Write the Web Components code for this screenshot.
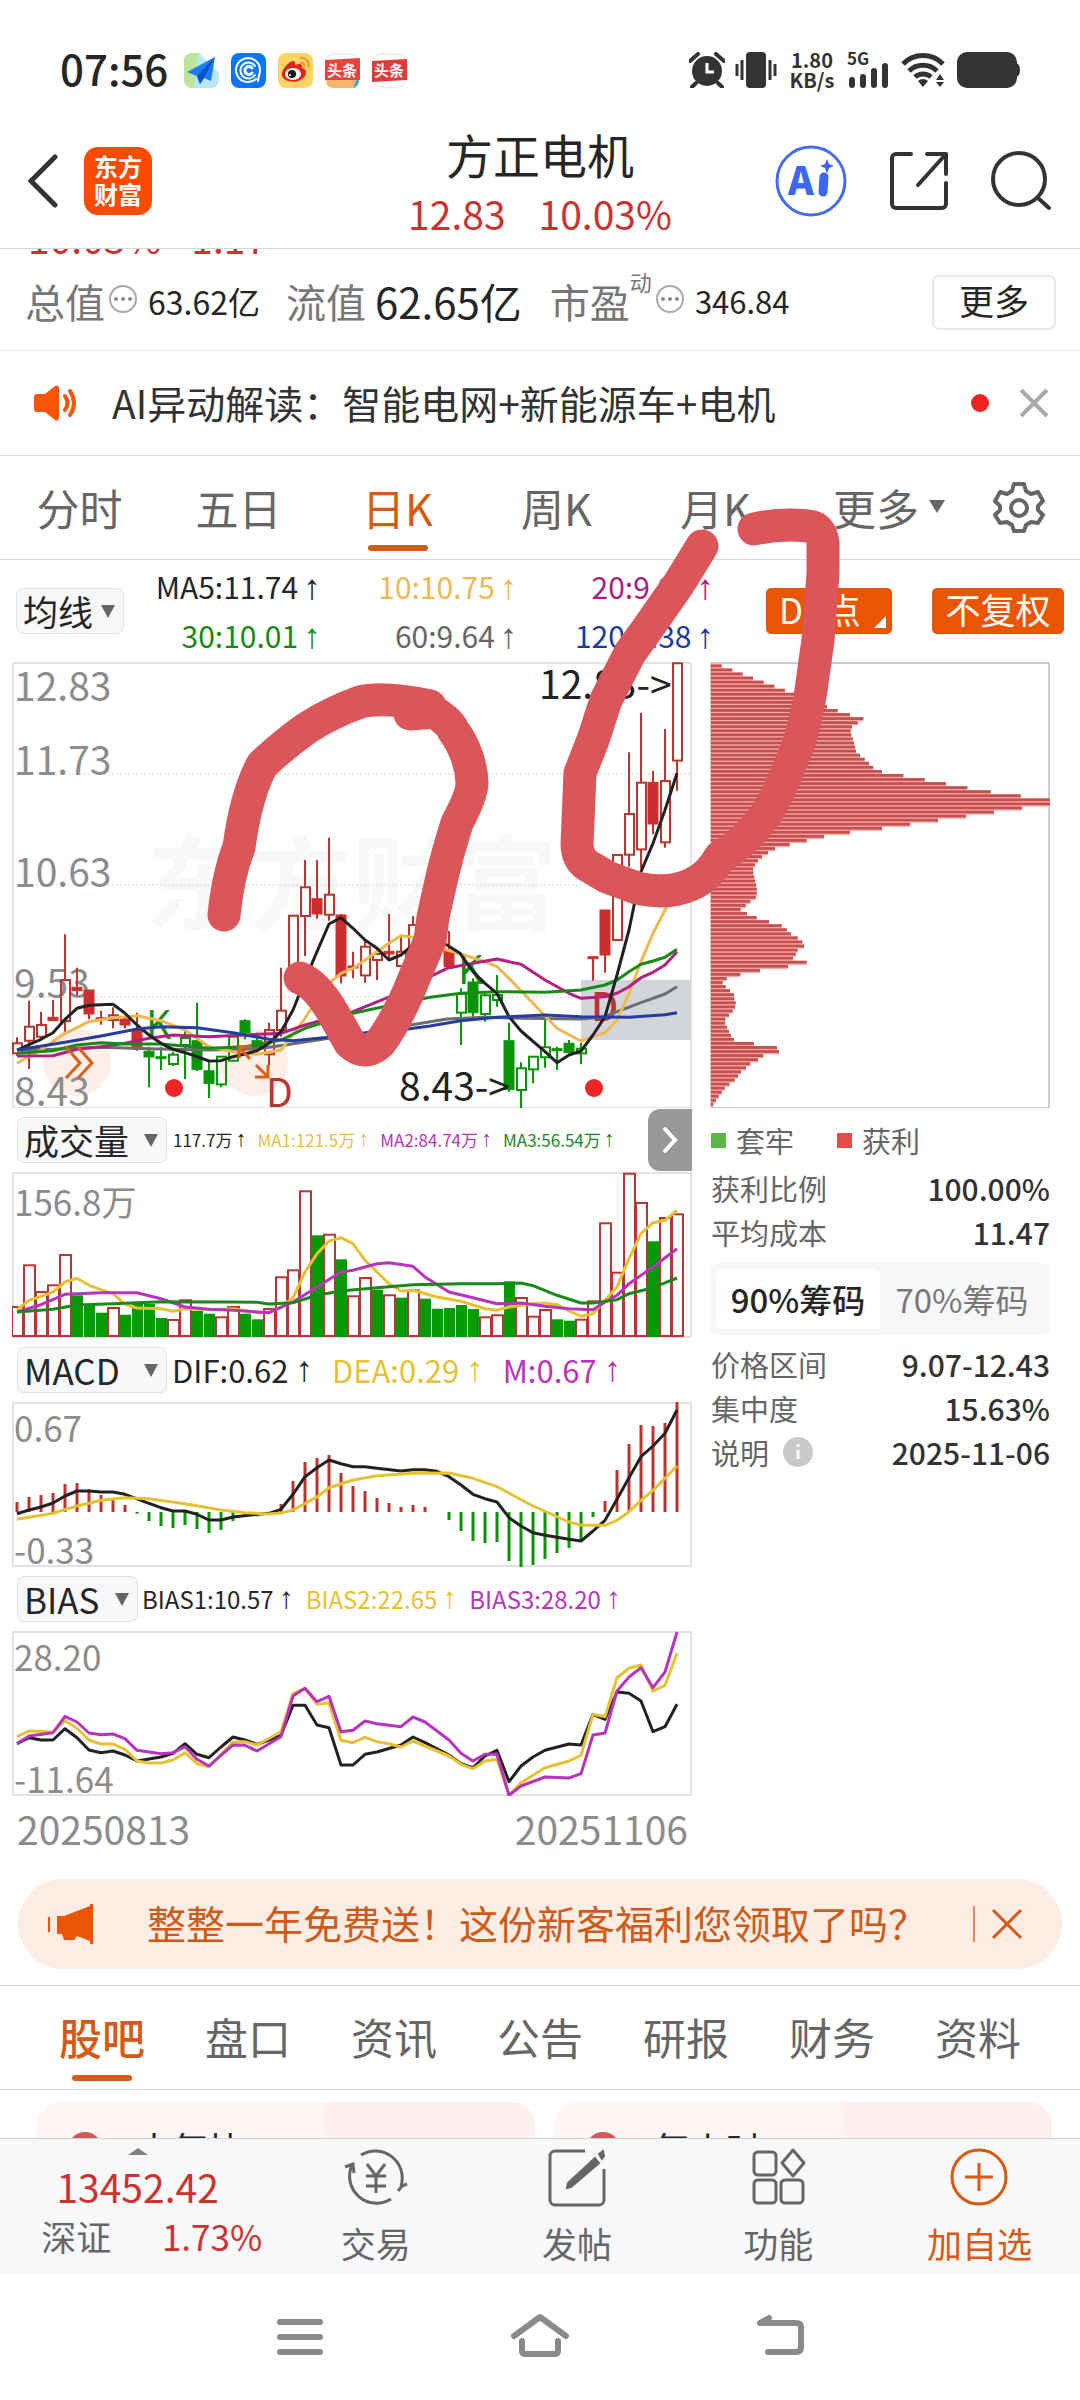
<!DOCTYPE html>
<html lang="zh-CN">
<head>
<meta charset="utf-8">
<meta name="viewport" content="width=device-width, initial-scale=1">
<title>方正电机 12.83</title>
<style>
    body {
        margin: 0;
        background: #fff;
        color: #262626;
        font-family: "Noto Sans CJK SC", "Noto Sans", sans-serif;
    }
</style>
</head>
<body>
<stock-page></stock-page>

<script>
const baseStyle = `
    * { box-sizing: border-box; }
    :host { display: block; }
    svg { display: block; }
    button, select {
        font: inherit;
        color: inherit;
        background: none;
        border: 0;
        padding: 0;
        margin: 0;
        cursor: pointer;
    }
    a { color: inherit; text-decoration: none; }
`;

class BaseElement extends HTMLElement {
    constructor() {
        super();
        this.shadowDOM = this.attachShadow({mode: "open"});
    }

    connectedCallback() {
        this.shadowDOM.innerHTML = `<style>${baseStyle}${this.styles()}</style>${this.markup()}`;
    }

    styles() { return ""; }
    markup() { return ""; }
}

class StatusBar extends BaseElement {
    styles() {
        return `
        :host { padding: 16px 60px 0 60px; }
        .bar { height: 108px; display: flex; align-items: center; }
        .time { font-size: 42px; font-weight: 500; line-height: 44px; margin: 0 16px 4px 0; }
        .apps { display: flex; gap: 12px; flex: 1; }
        .system { display: flex; align-items: center; gap: 10px; color: #333; }
        .speed { font-size: 20px; font-weight: 700; line-height: 20px; text-align: center; width: 50px; }
        .signal text { font-size: 17px; font-weight: 700; }
        .apps text { font-size: 15px; font-weight: 700; fill: #fff; }
        `;
    }

    markup() {
        return `
        <div class="bar">
            <span class="time">07:56</span>
            <div class="apps">
                <svg width="35" height="35" viewBox="0 0 35 35">
                    <rect width="35" height="35" rx="8" fill="#b8e7f7"/>
                    <path d="M0 8a8 8 0 0 1 8-8h6L10 35H8a8 8 0 0 1-8-8z" fill="#bde59a"/>
                    <path d="M15 0h12a8 8 0 0 1 8 8v12z" fill="#fff"/>
                    <path d="M31 4 3 19l10 4 3 8 4-6 7 3z" fill="#1a7df0"/>
                    <path d="M31 4 13 23l3 8 4-6z" fill="#0b56c4"/>
                </svg>
                <svg width="35" height="35" viewBox="0 0 35 35">
                    <rect width="35" height="35" rx="8" fill="#0a76f2"/>
                    <g fill="none" stroke="#fff" stroke-width="2" stroke-linecap="round">
                        <path d="M25 26a12 12 0 1 1 4-9c0 5-2 7-2 11"/>
                        <path d="M24 22a8 8 0 1 1 0-9"/>
                        <path d="M21 20a4 4 0 1 1 0-5" stroke-width="3"/>
                    </g>
                </svg>
                <svg width="35" height="35" viewBox="0 0 35 35">
                    <rect width="35" height="35" rx="8" fill="#fcd466"/>
                    <path d="M15 8c3 0 2 3 2 4 5-2 8-1 7 3 4 1 5 4 3 8-3 5-11 7-17 5C3 26 2 20 7 14c3-4 6-6 8-6z" fill="#e2231a"/>
                    <ellipse cx="15" cy="21" rx="8" ry="6" fill="#fff"/>
                    <circle cx="14" cy="21" r="4" fill="#111"/>
                    <circle cx="12" cy="22" r="1" fill="#fff"/>
                    <path d="M22 5c6-1 10 4 8 10M22 10c3-1 5 1 4 4" fill="none" stroke="#f3952c" stroke-width="2"/>
                </svg>
                <svg width="35" height="35" viewBox="0 0 35 35">
                    <rect x="1" y="1" width="33" height="33" rx="8" fill="#fff" stroke="#e2e2e2"/>
                    <path d="M0 7 35 5v22H0z" fill="#e8433f"/>
                    <path d="M1 27h33c0 5-3 8-8 8H9c-5 0-8-3-8-8z" fill="#f8b46c"/>
                    <path d="M28 35c4-1 6-4 6-8h-3z" fill="#38b2cf"/>
                    <text x="2" y="23">头条</text>
                </svg>
                <svg width="35" height="35" viewBox="0 0 35 35">
                    <rect x="1" y="1" width="33" height="33" rx="8" fill="#fff" stroke="#e2e2e2"/>
                    <path d="M0 8 35 6v21L0 29z" fill="#e03a3a"/>
                    <text x="2" y="23">头条</text>
                </svg>
            </div>
            <div class="system">
                <svg width="36" height="36" viewBox="0 0 36 36" fill="#333">
                    <circle cx="18" cy="19" r="15"/>
                    <path d="M18 11v9h7" fill="none" stroke="#fff" stroke-width="3"/>
                    <path d="M1 9 9 2M27 2l8 7M7 31l-4 4M29 31l4 4" stroke="#333" stroke-width="4" stroke-linecap="round"/>
                </svg>
                <svg width="42" height="36" viewBox="0 0 42 36" fill="#333">
                    <rect x="11" width="20" height="36" rx="4"/>
                    <path d="M2 12v12M7 8v20M35 8v20M40 12v12" stroke="#333" stroke-width="3"/>
                </svg>
                <span class="speed">1.80 KB/s</span>
                <svg class="signal" width="44" height="36" viewBox="0 0 44 36" fill="#333">
                    <text x="0" y="13">5G</text>
                    <path d="M5 28v5M16 25v8M27 19v14M38 14v19" stroke="#333" stroke-width="6" stroke-linecap="round"/>
                </svg>
                <svg width="46" height="36" viewBox="0 0 46 36" fill="none" stroke="#333" stroke-width="5">
                    <path d="M2 12a28 28 0 0 1 40 0M8 19a20 20 0 0 1 28 0M14 25a12 12 0 0 1 16 0"/>
                    <path d="M17 29a7 7 0 0 1 10 0l-5 6zM35 28l4-6 4 6zM35 30h8l-4 5z" fill="#333" stroke="none"/>
                </svg>
                <svg width="63" height="36" viewBox="0 0 63 36" fill="#333">
                    <rect width="60" height="36" rx="10"/>
                    <path d="M59 11q4 1 4 7t-4 7z"/>
                </svg>
            </div>
        </div>`;
    }
}
customElements.define("status-bar", StatusBar);

class StockHeader extends BaseElement {
    styles() {
        return `
        :host { border-bottom: 1px solid #d5d5d8; }
        header { height: 124px; display: grid; grid-template-columns: 1fr auto 1fr; align-items: center; padding: 0 28px; }
        .side { display: flex; align-items: center; padding-bottom: 10px; }
        .left { gap: 26px; }
        .right { justify-content: flex-end; gap: 41px; }
        .logo {
            width: 68px; height: 68px; border-radius: 14px; background: #fb4a02; color: #fff;
            font-size: 24px; font-weight: 700; line-height: 28px; padding: 5px 10px; text-align: center;
        }
        .title { text-align: center; padding-bottom: 6px; }
        h1 { margin: 0; font-size: 47px; font-weight: 400; line-height: 60px; }
        .quote { display: flex; justify-content: center; gap: 33px; font-size: 39px; line-height: 58px; color: #cd3230; }
        .ai text { font-size: 39px; font-weight: 900; fill: #3c66f4; }
        `;
    }

    markup() {
        return `
        <header>
            <div class="side left">
                <button aria-label="返回">
                    <svg width="30" height="54" viewBox="0 0 30 54" fill="none" stroke="#333" stroke-width="5" stroke-linecap="round"><path d="M27 3 3 27l24 24"/></svg>
                </button>
                <a class="logo" href="#home">东方<br>财富</a>
            </div>
            <div class="title">
                <h1>方正电机</h1>
                <div class="quote"><span>12.83</span><span>10.03%</span></div>
            </div>
            <div class="side right">
                <button class="ai" aria-label="Ai">
                    <svg width="74" height="74" viewBox="0 0 74 74">
                        <circle cx="37" cy="37" r="34" fill="none" stroke="#456cf0" stroke-width="3"/>
                        <text x="14" y="51">A</text>
                        <path d="m50 33-1 15" stroke="#3c66f4" stroke-width="9" stroke-linecap="round"/>
                        <path d="m53 15 2 5 5 2-5 2-2 6-2-6-5-2 5-2z" fill="#3c66f4"/>
                    </svg>
                </button>
                <button aria-label="分享">
                    <svg width="60" height="60" viewBox="0 0 60 60" fill="none" stroke="#333" stroke-width="4" stroke-linecap="round" stroke-linejoin="round">
                        <path d="M22 3H7a4 4 0 0 0-4 4v46a4 4 0 0 0 4 4h46a4 4 0 0 0 4-4V32M38 3h19v20M57 3 29 34"/>
                    </svg>
                </button>
                <button aria-label="搜索">
                    <svg width="62" height="60" viewBox="0 0 62 60" fill="none" stroke="#333" stroke-width="4" stroke-linecap="round">
                        <circle cx="29" cy="28" r="26"/><path d="m48 47 11 10"/>
                    </svg>
                </button>
            </div>
        </header>`;
    }
}
customElements.define("stock-header", StockHeader);

class StockStats extends BaseElement {
    styles() {
        return `
        :host { border-bottom: 1px solid #ececee; }
        .previous { height: 8px; overflow: hidden; display: flex; align-items: flex-end; gap: 30px; padding-left: 28px; font-size: 39px; line-height: 40px; color: #cd3230; }
        .row { height: 93px; display: flex; align-items: center; padding: 0 24px 6px 25px; white-space: nowrap; }
        .name { font-size: 40px; color: #777; }
        .value { font-size: 32px; margin-right: 26px; }
        .large { font-size: 42px; margin: 0 28px 0 9px; }
        .more { margin: 3px 0 0 auto; width: 124px; height: 55px; border: 2px solid #e6e7ea; border-radius: 7px; font-size: 35px; line-height: 46px; padding-bottom: 5px; }
        svg { margin: 0 10px 4px 3px; flex: none; }
        sup { font-size: 22px; color: #777; align-self: flex-start; line-height: 48px; }
        .ratio { font-size: 31px; }
        `;
    }

    markup() {
        const bubble = `<svg width="30" height="30" viewBox="0 0 30 30"><circle cx="15" cy="15" r="13" fill="none" stroke="#aaa" stroke-width="2"/><g fill="#888"><circle cx="8" cy="15" r="2"/><circle cx="15" cy="15" r="2"/><circle cx="22" cy="15" r="2"/></g></svg>`;
        return `
        <div class="previous"><span>10.03%</span><span>1.17</span></div>
        <div class="row">
            <span class="name">总值</span>${bubble}<span class="value">63.62亿</span>
            <span class="name">流值</span><span class="large">62.65亿</span>
            <span class="name">市盈</span><sup>动</sup>${bubble}<span class="ratio">346.84</span>
            <button class="more">更多</button>
        </div>`;
    }
}
customElements.define("stock-stats", StockStats);

class NoticeBar extends BaseElement {
    styles() {
        return `
        :host { border-bottom: 1px solid #d8dade; }
        .row { height: 104px; display: flex; align-items: center; padding: 0 31px 0 34px; }
        .text { flex: 1; margin-left: 32px; padding-bottom: 3px; font-size: 39px; color: #333; white-space: nowrap; }
        .dot { width: 18px; height: 18px; border-radius: 50%; background: #f02222; margin-right: 30px; }
        `;
    }

    markup() {
        return `
        <div class="row">
            <svg width="46" height="36" viewBox="0 0 46 36">
                <path d="M3 9h8L21 1q4-2 4 3v28q0 5-4 3l-10-8H3q-3 0-3-3V12q0-3 3-3z" fill="#fb5404"/>
                <path d="M31 11q5 7 0 14M36 6q8 12 0 24" fill="none" stroke="#fb5404" stroke-width="4" stroke-linecap="round"/>
            </svg>
            <span class="text"><slot></slot></span>
            <i class="dot"></i>
            <button aria-label="关闭"><svg width="30" height="30" viewBox="0 0 30 30"><path d="m2 2 26 26M28 2 2 28" stroke="#aaa" stroke-width="4"/></svg></button>
        </div>`;
    }
}
customElements.define("notice-bar", NoticeBar);

class PeriodTabs extends BaseElement {
    styles() {
        return `
        :host { border-bottom: 1px solid #d5d8dc; }
        nav { height: 103px; display: flex; padding-right: 25px; color: #666; font-size: 43px; }
        button { flex: 159; position: relative; line-height: 60px; padding-bottom: 2px; }
        .more { flex: 188; display: flex; align-items: center; justify-content: center; gap: 10px; }
        .gear { flex: 72; display: flex; align-items: center; justify-content: center; }
        .on { color: #d65a14; }
        .on::after { content: ""; position: absolute; left: 50%; bottom: 8px; width: 60px; height: 6px; margin-left: -30px; border-radius: 3px; background: #d65a14; }
        `;
    }

    markup() {
        return `
        <nav>
            <button>分时</button><button>五日</button><button class="on">日K</button><button>周K</button><button>月K</button>
            <button class="more">更多<svg width="16" height="14" viewBox="0 0 16 14"><path d="M0 0h16L8 13z" fill="#666"/></svg></button>
            <button class="gear" aria-label="设置">
                <svg width="52" height="52" viewBox="0 0 52 52" fill="none" stroke="#666" stroke-width="4" stroke-linejoin="round">
                    <path d="M21 3h10l2 7 5 3 7-2 5 9-5 5v4l5 5-5 8-7-1-5 3-2 6H21l-2-6-5-3-7 1-5-8 5-5v-4l-5-5 5-9 7 2 5-3z"/>
                    <circle cx="26" cy="27" r="8"/>
                </svg>
            </button>
        </nav>`;
    }
}
customElements.define("period-tabs", PeriodTabs);

class DropPick extends BaseElement {
    styles() {
        return `
        :host { flex: none; position: relative; }
        select { appearance: none; width: 100%; height: 46px; padding: 0 6px 3px; border: 1px solid #dfe2e6; border-radius: 7px; background: #f6f8fa; font-size: 35px; line-height: 44px; color: #262626; }
        :host::after { content: ""; position: absolute; right: 9px; top: 17px; border: 7px solid transparent; border-top: 13px solid #666; border-bottom: 0; }
        `;
    }

    markup() {
        return `<select aria-label="指标"><option>${this.getAttribute("value")}</option></select>`;
    }
}
customElements.define("drop-pick", DropPick);

class AverageBar extends BaseElement {
    styles() {
        return `
        .bar { height: 102px; display: flex; align-items: center; padding: 0 16px; }
        drop-pick { width: 108px; }
        .list { flex: 1; display: grid; grid-template-columns: repeat(3, 1fr); margin-right: 52px; font-size: 30px; line-height: 49px; text-align: right; white-space: nowrap; }
        .list i { font-family: "Liberation Sans", sans-serif; font-style: normal; font-size: 35px; line-height: 40px; margin-left: 5px; }
        .tag { height: 46px; background: #ea5504; color: #fff; border-radius: 5px; font-size: 35px; line-height: 42px; padding-bottom: 4px; position: relative; }
        .dk { width: 126px; margin-right: 40px; text-align: left; padding-left: 13px; }
        .dk::after { content: ""; position: absolute; right: 6px; bottom: 6px; border-left: 12px solid transparent; border-bottom: 12px solid #fff; }
        .adjust { width: 132px; }
        `;
    }

    markup() {
        const items = [
            ["MA5:11.74", "#262626"], ["10:10.75", "#efb94f"], ["20:9.98", "#ad1c80"],
            ["30:10.01", "#148a14"], ["60:9.64", "#666"], ["120:9.38", "#203a9a"],
        ];
        return `
        <div class="bar">
            <drop-pick value="均线"></drop-pick>
            <div class="list">${items.map(([text, color]) => `<span style="color:${color}">${text}<i>↑</i></span>`).join("")}</div>
            <button class="tag dk">DK点</button>
            <button class="tag adjust">不复权</button>
        </div>`;
    }
}
customElements.define("average-bar", AverageBar);

const RED = "#b83632";
const GREEN = "#0a940a";
const STEP = 12;
const slot = (i) => 5 + STEP * i;

// "x,y x,y" pairs in chart data units to an svg polyline
function trend(points, color, toX, toY) {
    const path = points.split(" ").map((pair) => {
        const [x, y] = pair.split(",").map(Number);
        return `${toX(x)},${toY(y).toFixed(1)}`;
    });
    return `<polyline points="${path.join(" ")}" fill="none" stroke="${color}" stroke-width="3" stroke-linejoin="round"/>`;
}

// high, body top, body bottom, low, kind (h hollow red, f solid red, G hollow green, g solid green)
const candles = `
1162 1180 1210 1218 h|1052 1130 1172 1257 h|1085 1125 1160 1168 h|1050 1102 1112 1112 f|853 990 1113 1145 h|953 1012 1022 1035 f
1020 1020 1092 1108 f|1082 1103 1109 1124 f|1072 1096 1110 1135 h|1100 1107 1125 1135 f|1088 1140 1198 1202 f|1190 1204 1221 1312 g
1190 1220 1225 1260 g|1205 1214 1242 1248 G|1130 1164 1185 1287 G|1058 1172 1258 1263 g|1232 1262 1300 1344 g|1218 1220 1303 1312 G
1155 1160 1232 1232 G|1108 1112 1148 1168 g|1148 1172 1192 1200 g|1118 1140 1213 1245 h|953 1082 1140 1160 h|795 797 1010 1010 h
630 712 798 918 h|630 746 792 806 f|563 734 794 812 h|792 795 978 1000 f|905 948 954 985 f|872 890 976 998 h
895 912 930 990 h|792 904 912 928 f|855 905 948 950 h|798 825 900 930 h|830 860 900 930 f|850 870 900 930 f
843 900 950 950 f|1015 1032 1088 1185 G|985 996 1088 1100 g|1030 1036 1092 1115 G|975 1035 1050 1070 G|1118 1172 1318 1325 g
1237 1255 1320 1376 G|1220 1220 1258 1300 G|1108 1192 1222 1253 G|1190 1196 1201 1260 g|1170 1180 1208 1210 g|1178 1196 1210 1242 G
920 920 926 992 f|780 780 915 968 f|613 615 870 870 h|307 492 614 650 h|188 398 598 655 h|362 397 522 553 f
237 393 577 593 h|37 40 332 422 h`.trim().split(/[|\n]/);

class KlineChart extends BaseElement {
    styles() {
        return `
        svg { width: 100%; height: auto; }
        .axis { font-size: 39px; fill: #8c8c8c; }
        .mark { font-size: 39px; }
        .brand { font-size: 103px; font-weight: 700; fill: #f8f8f8; }
        `;
    }

    candle(row, i) {
        const [high, top, bottom, low, kind] = row.split(" ");
        const y = (v) => ((v - 36) / 3);
        const x = slot(i);
        const color = kind.toLowerCase() === "g" ? GREEN : kind === "f" ? "#cc302e" : RED;
        const hollow = kind === "h" || kind === "G";
        const inset = hollow ? 1 : 0;
        return `<path d="M${x} ${y(high).toFixed(1)}V${y(top).toFixed(1)}M${x} ${y(bottom).toFixed(1)}V${y(low).toFixed(1)}" stroke="${color}" stroke-width="2"/>
            <rect x="${x - 5 + inset}" y="${y(top).toFixed(1)}" width="${10 - inset * 2 + (hollow ? 1 : 0)}" height="${Math.max(2, (bottom - top) / 3).toFixed(1)}" fill="${hollow ? "none" : color}" stroke="${color}" stroke-width="${hollow ? 2 : 1}"/>`;
    }

    markup() {
        const x = (v) => v - 12;
        const y = (v) => (v - 36) / 3;
        const lines = [
            ["17,1200 53,1198 101,1192 149,1196 209,1200 257,1197 290,1183 329,1165 365,1148 400,1130 447,1107 485,1102 521,1105 581,1107 605,1100 617,1085 641,1058 665,1032 677,1010", "#6d6d70"],
            ["17,1240 41,1200 65,1150 89,1115 113,1103 137,1097 161,1112 185,1140 209,1190 233,1205 257,1213 281,1200 305,1105 325,1010 341,970 353,955 377,905 389,880 401,857 413,862 430,880 447,900 461,912 485,935 497,950 509,985 533,1060 557,1135 581,1173 593,1160 605,1148 617,1110 629,1030 641,935 653,850 665,780 677,715", "#efb850"],
            ["17,1218 53,1217 77,1198 101,1190 125,1180 149,1165 173,1155 209,1160 245,1155 281,1150 305,1125 353,1085 390,1040 420,995 447,955 473,940 497,927 521,943 545,990 569,1030 581,1045 605,1040 617,1030 629,1010 641,983 653,967 665,945 677,905", "#b3207f"],
            ["17,1210 53,1202 77,1185 101,1178 125,1182 161,1182 209,1195 245,1190 281,1170 305,1135 353,1090 400,1060 430,1042 461,1030 497,1025 545,1027 581,1020 605,1005 617,990 629,965 641,943 653,933 665,922 677,898", "#168c16"],
            ["17,1200 41,1168 53,1148 65,1108 77,1075 89,1066 113,1063 125,1090 137,1125 149,1155 161,1180 173,1198 185,1208 197,1220 209,1233 221,1232 233,1220 245,1212 257,1202 269,1180 281,1145 293,1080 305,990 317,905 329,822 341,803 353,835 365,870 377,895 389,930 401,915 413,885 430,870 447,885 460,910 473,965 485,1000 497,1030 509,1100 521,1143 545,1205 557,1238 569,1215 581,1203 593,1155 605,1100 617,975 629,840 641,665 653,580 665,480 677,370", "#222"],
            ["17,1200 65,1177 101,1158 137,1137 161,1130 197,1133 233,1148 269,1168 293,1172 329,1162 365,1150 400,1140 430,1128 461,1112 497,1102 545,1095 581,1100 629,1102 665,1094 677,1088", "#263c9e"],
        ];
        return `
        <svg viewBox="0 0 680 446" role="img" aria-label="日K线图">
            <text class="brand" x="134" y="261">东方财富</text>
            <rect x="1" y="1" width="678" height="445" fill="none" stroke="#e2e2e2" stroke-width="2"/>
            <path d="M0 112h680M0 223h680M0 335h680" stroke="#d4d4d4" stroke-dasharray="2 2"/>
            <rect x="569" y="318" width="110" height="60" fill="#d2d6db"/>
            <g fill="#fdeee7"><circle cx="65" cy="400" r="34"/><circle cx="242" cy="400" r="34"/></g>
            <g class="axis">
                <text x="2" y="39">12.83</text><text x="2" y="113">11.73</text><text x="2" y="225">10.63</text>
                <text x="2" y="336">9.53</text><text x="2" y="444">8.43</text>
            </g>
            <g class="mark">
                <text x="134" y="377" fill="#168c16">K</text><text x="446" y="322" fill="#168c16">K</text>
                <text x="254" y="445" fill="#b83632">D</text><text x="579" y="359" fill="#b83632" font-weight="500">D</text>
            </g>
            ${candles.map(this.candle).join("")}
            ${lines.map(([points, color]) => trend(points, color, x, y)).join("")}
            <g fill="none" stroke="#dc5f16" stroke-width="3">
                <path d="m54 385 14 16-14 15M66 385l14 16-14 15"/>
                <path d="M227 396v-11h13M227 385l11 12M244 403l12 12M256 403v12h-13"/>
            </g>
            <g fill="#f22323"><circle cx="162" cy="426" r="9"/><circle cx="582" cy="426" r="9"/></g>
            <g class="mark" fill="#222">
                <text x="527" y="37">12.83-&gt;</text><text x="387" y="439">8.43-&gt;</text>
            </g>
        </svg>`;
    }
}
customElements.define("kline-chart", KlineChart);

class IndicatorRow extends BaseElement {
    styles() {
        return `
        .row { height: 64px; display: flex; align-items: center; padding-left: 5px; }
        .next { flex: none; margin-left: auto; width: 44px; height: 62px; background: #999; border-radius: 12px 0 0 12px; display: flex; align-items: center; justify-content: center; }
        `;
    }

    markup() {
        const next = this.hasAttribute("next")
            ? `<button class="next" aria-label="展开"><svg width="16" height="28" viewBox="0 0 16 28"><path d="m3 3 10 11L3 25" fill="none" stroke="#fff" stroke-width="4" stroke-linecap="round"/></svg></button>`
            : "";
        return `
        <div class="row">
            <drop-pick value="${this.getAttribute("name")}" style="width:${this.getAttribute("pick")}px"></drop-pick>
            <slot></slot>${next}
        </div>`;
    }
}
customElements.define("indicator-row", IndicatorRow);

class VolumeChart extends BaseElement {
    styles() {
        return `svg { width: 100%; height: auto; } text { font-size: 35px; fill: #8c8c8c; }`;
    }

    markup() {
        const tops = "617h 492h 572h 552h 461h 585g 612g 637g 620h 643g 608g 610g 653g 656h 597h 632g 640g 648h 617h 640g 657g 623h 528h 507h 270h 405g 400h 477g 585h 530h 568g 582h 592g 567h 595g 625g 623g 614g 626g 648h 642h 543g 590h 646h 626h 657g 661g 655h 600h 366h 514h 217h 305h 423g 350h 339h";
        const y = (v) => (v - 215) / 3;
        const bars = tops.split(" ").map((item, i) => {
            const top = y(parseInt(item, 10));
            return item.endsWith("g")
                ? `<rect x="${slot(i) - 5}" y="${top.toFixed(1)}" width="11" height="${(165 - top).toFixed(1)}" fill="#069b06"/>`
                : `<rect x="${slot(i) - 5}" y="${(top + 1).toFixed(1)}" width="11" height="${(163 - top).toFixed(1)}" fill="#fff" stroke="${RED}" stroke-width="2"/>`;
        });
        return `
        <svg viewBox="0 0 680 166" role="img" aria-label="成交量">
            <rect x="1" y="1" width="678" height="164" fill="none" stroke="#e2e2e2" stroke-width="2"/>
            <text x="2" y="44">156.8万</text>
            ${bars.join("")}
            ${trend("0,628 1,600 2,588 3,575 4,545 5,534 6,555 7,568 8,580 9,612 10,623 12,625 13,633 14,625 16,628 18,625 20,637 21,637 22,620 23,593 24,515 25,460 26,422 27,412 28,430 29,480 31,550 32,572 33,570 35,590 37,603 39,625 40,630 41,620 43,610 44,608 45,613 46,632 47,648 48,640 49,600 50,560 51,475 52,400 53,367 54,360 55,330", "#e6c233", slot, y)}
            ${trend("0,635 2,613 4,582 7,577 10,577 12,595 14,620 16,627 18,630 21,637 23,605 25,560 27,515 28,510 30,490 31,487 33,498 34,530 36,575 38,592 40,610 42,608 44,618 46,625 48,628 49,605 50,585 51,550 53,500 55,445", "#b834bd", slot, y)}
            ${trend("0,635 3,627 5,614 8,610 12,604 18,605 20,606 21,611 23,607 25,585 27,572 30,562 33,553 37,550 40,550 42,548 43,556 45,585 47,608 48,608 50,598 51,580 53,562 55,533", "#178a1b", slot, y)}
        </svg>`;
    }
}
customElements.define("volume-chart", VolumeChart);

class MacdChart extends BaseElement {
    styles() {
        return `svg { width: 100%; height: auto; } text { font-size: 35px; fill: #8c8c8c; }`;
    }

    markup() {
        const ends = [483, 468, 462, 456, 429, 426, 445, 462, 475, 492, 518, 540, 555, 561, 552, 564, 576, 567, 540, 526, 526, 516, 489, 420, 363, 351, 342, 396, 435, 450, 471, 486, 498, 492, 498, 513, 537, 570, 600, 606, 603, 660, 678, 672, 654, 636, 621, 603, 528, 480, 387, 309, 252, 255, 246, 183];
        const y = (v) => (v - 183) / 3;
        return `
        <svg viewBox="0 0 680 165" role="img" aria-label="MACD">
            <rect x="1" y="1" width="678" height="163" fill="none" stroke="#e2e2e2" stroke-width="2"/>
            <text x="2" y="40">0.67</text><text x="2" y="162">-0.33</text>
            ${ends.map((end, i) => `<path d="M${slot(i)} 110V${y(end).toFixed(1)}" stroke="${end < 513 ? RED : GREEN}" stroke-width="3"/>`).join("")}
            ${trend("0,518 1,507 2,498 3,486 4,465 5,450 6,450 7,453 8,453 9,460 11,487 12,500 13,510 14,510 15,520 16,537 17,537 18,528 20,520 21,517 22,505 23,460 24,407 25,380 26,357 27,368 28,377 29,377 30,382 32,390 33,386 34,386 35,391 36,407 37,432 38,460 39,473 40,483 41,530 42,555 43,575 44,583 46,595 47,600 48,570 49,538 50,475 51,410 52,347 53,315 54,277 55,207", "#222", slot, y)}
            ${trend("0,535 3,517 5,495 7,478 9,470 11,473 14,488 17,507 19,515 21,519 22,516 23,507 25,468 26,440 28,417 30,404 33,397 36,396 38,412 40,437 43,495 46,543 47,553 49,553 50,538 51,512 52,478 53,448 54,412 55,375", "#e6c233", slot, y)}
        </svg>`;
    }
}
customElements.define("macd-chart", MacdChart);

class BiasChart extends BaseElement {
    styles() {
        return `
        svg { width: 100%; height: auto; }
        text { font-size: 35px; fill: #8c8c8c; }
        .dates { display: flex; justify-content: space-between; padding: 0 4px 4px 5px; font-size: 39px; line-height: 64px; color: #8c8c8c; }
        `;
    }

    markup() {
        const y = (v) => (v - 180) / 3;
        return `
        <svg viewBox="0 0 680 165" role="img" aria-label="BIAS">
            <rect x="1" y="1" width="678" height="163" fill="none" stroke="#e2e2e2" stroke-width="2"/>
            <text x="2" y="40">28.20</text><text x="2" y="162">-11.64</text>
            ${trend("0,518 1,500 2,507 3,507 4,473 5,500 6,537 7,545 8,540 9,552 10,570 12,558 13,547 14,518 15,550 16,560 17,528 18,498 19,507 20,520 21,507 22,493 23,403 24,403 25,462 26,470 27,582 28,582 29,550 30,543 32,522 33,498 34,515 36,552 37,578 38,590 39,555 40,538 41,632 42,585 43,558 44,538 46,519 47,522 48,430 49,445 50,363 51,367 52,390 53,482 54,467 55,400", "#222", slot, y)}
            ${trend("0,497 1,480 3,483 4,449 5,472 6,507 7,519 8,519 9,535 10,570 11,576 12,576 13,567 14,545 15,578 16,587 18,513 19,512 20,522 22,482 23,368 24,352 25,400 26,396 27,508 28,515 29,499 30,512 31,518 32,528 33,510 35,540 36,555 37,580 38,593 39,570 40,565 41,672 42,635 44,590 46,570 47,553 48,430 49,437 50,320 51,292 52,282 53,360 54,343 55,247", "#e6c233", slot, y)}
            ${trend("0,518 1,495 3,485 4,436 5,453 6,486 7,491 8,489 9,503 10,538 12,548 13,545 14,527 15,565 16,585 17,553 18,522 19,523 20,540 22,497 23,375 24,352 25,392 26,376 27,482 28,478 29,450 30,458 32,467 33,438 34,453 36,507 37,547 38,570 39,550 40,550 41,673 42,645 44,618 46,621 47,608 48,492 49,486 50,360 51,318 52,290 53,350 54,303 55,183", "#b834bd", slot, y)}
        </svg>
        <div class="dates"><span>20250813</span><span>20251106</span></div>`;
    }
}
customElements.define("bias-chart", BiasChart);

class ChipPanel extends BaseElement {
    styles() {
        return `
        svg { width: 100%; height: auto; }
        .legend { display: flex; gap: 43px; height: 58px; align-items: center; padding: 6px 0 0 1px; font-size: 29px; color: #666; }
        .legend span { display: flex; align-items: center; gap: 10px; }
        .legend i { width: 15px; height: 15px; }
        dl { margin: 0; }
        dl div { display: flex; justify-content: space-between; align-items: center; height: 44px; font-size: 29px; }
        dt { color: #666; display: flex; align-items: center; gap: 14px; padding-left: 1px; }
        dt svg { width: 30px; }
        dd { margin: 0; font-size: 30px; font-weight: 500; color: #333; }
        .switch { display: flex; height: 72px; margin: 9px 0 7px; padding: 6px; background: #f7f7fa; border-radius: 7px; font-size: 33px; color: #777; }
        .switch button { flex: 1; border-radius: 6px; line-height: 58px; }
        .switch .on { background: #fff; color: #262626; font-weight: 500; }
        `;
    }

    markup() {
        const ends = [65, 97, 128, 159, 191, 223, 255, 290, 320, 350, 381, 413, 450, 490, 473, 456, 452, 454, 458, 462, 465, 468, 480, 494, 507, 520, 546, 610, 674, 738, 802, 872, 962, 1050, 1050, 966, 882, 798, 714, 630, 546, 450, 372, 320, 269, 225, 204, 186, 174, 165, 159, 160, 163, 165, 168, 170, 170, 167, 151, 137, 122, 141, 170, 207, 245, 260, 273, 293, 307, 312, 293, 287, 279, 320, 264, 180, 121, 80, 68, 77, 90, 102, 103, 107, 105, 98, 87, 76, 75, 81, 87, 93, 102, 162, 231, 237, 190, 174, 151, 138, 123, 114, 104, 88, 74, 65, 56, 48, 40];
        const bars = ends.map((end, i) => {
            const y = (2.4 + i * 4.06).toFixed(2);
            const width = ((end - 33) / 3).toFixed(1);
            return `<rect x="1" y="${y}" width="${width}" height="4.06" fill="#f9a8a4"/><rect x="1" y="${y}" width="${width}" height="2.8" fill="#c4504f"/>`;
        });
        return `
        <svg viewBox="0 0 340 446" role="img" aria-label="筹码分布">
            <rect x="1" y="1" width="338" height="445" fill="none" stroke="#ccc" stroke-width="2"/>
            ${bars.join("")}
        </svg>
        <div class="legend"><span><i style="background:#5cb747"></i>套牢</span><span><i style="background:#e64b4b"></i>获利</span></div>
        <dl>
            <div><dt>获利比例</dt><dd>100.00%</dd></div>
            <div><dt>平均成本</dt><dd>11.47</dd></div>
        </dl>
        <div class="switch"><button class="on">90%筹码</button><button>70%筹码</button></div>
        <dl>
            <div><dt>价格区间</dt><dd>9.07-12.43</dd></div>
            <div><dt>集中度</dt><dd>15.63%</dd></div>
            <div><dt>说明 <svg viewBox="0 0 30 30"><circle cx="15" cy="15" r="15" fill="#c9c9c9"/><path d="M15 13v9M15 7v3" stroke="#fff" stroke-width="3"/></svg></dt><dd>2025-11-06</dd></div>
        </dl>`;
    }
}
customElements.define("chip-panel", ChipPanel);

class ValueList extends BaseElement {
    styles() {
        return `
        .list { display: flex; white-space: nowrap; padding-bottom: 2px; }
        span { display: flex; align-items: center; }
        i { font-family: "Liberation Sans", sans-serif; font-style: normal; }
        .small { font-size: 17px; gap: 11px; margin-left: 6px; }
        .small i { font-size: 22px; margin-left: 3px; }
        .medium { font-size: 24px; gap: 12px; margin-left: 4px; }
        .medium i { font-size: 30px; margin-left: 5px; }
        .large { font-size: 31px; gap: 19px; margin-left: 5px; }
        .large i { font-size: 35px; margin-left: 7px; }
        `;
    }

    markup() {
        const colors = this.getAttribute("colors").split(" ");
        const values = this.getAttribute("values").split(" ");
        return `<div class="list ${this.getAttribute("size")}">${values.map((value, i) => `<span style="color:${colors[i]}">${value}<i>↑</i></span>`).join("")}</div>`;
    }
}
customElements.define("value-list", ValueList);

class PromoBanner extends BaseElement {
    styles() {
        return `
        :host { padding: 15px 18px 16px; border-bottom: 1px solid #d5d8dc; }
        .pill { height: 90px; border-radius: 45px; background: #fcede4; color: #cf5a18; display: flex; align-items: center; padding: 0 39px 0 30px; }
        .text { flex: 1; margin-left: 53px; padding-bottom: 4px; font-size: 39px; white-space: nowrap; }
        .line { width: 2px; height: 36px; background: #d98a5e; margin-right: 16px; }
        `;
    }

    markup() {
        return `
        <div class="pill">
            <svg width="46" height="40" viewBox="0 0 46 40" fill="#ea5504">
                <path d="M1 13v15" stroke="#ea5504" stroke-width="2"/>
                <path d="M9 12h7L42 2V0h3v40h-3v-3l-13-5-3 4H16l-2-6H9z"/>
            </svg>
            <span class="text"><slot></slot></span>
            <i class="line"></i>
            <button aria-label="关闭"><svg width="32" height="32" viewBox="0 0 32 32"><path d="m2 2 28 28M30 2 2 30" stroke="#cf5a18" stroke-width="3"/></svg></button>
        </div>`;
    }
}
customElements.define("promo-banner", PromoBanner);

class InfoTabs extends BaseElement {
    styles() {
        return `
        :host { border-bottom: 1px solid #d5d8dc; }
        nav { height: 103px; display: flex; padding: 0 29px; color: #666; font-size: 43px; }
        button { flex: 1; position: relative; line-height: 60px; padding-bottom: 3px; }
        .on { color: #d65a14; font-weight: 500; }
        .on::after { content: ""; position: absolute; left: 50%; bottom: 8px; width: 60px; height: 6px; margin-left: -30px; border-radius: 3px; background: #d65a14; }
        `;
    }

    markup() {
        const names = ["股吧", "盘口", "资讯", "公告", "研报", "财务", "资料"];
        return `<nav>${names.map((name, i) => `<button${i ? "" : ` class="on"`}>${name}</button>`).join("")}</nav>`;
    }
}
customElements.define("info-tabs", InfoTabs);

class TopicCards extends BaseElement {
    styles() {
        return `
        .cards { height: 48px; overflow: hidden; display: grid; grid-template-columns: 1fr 1fr; gap: 19px; padding: 12px 28px 0 36px; }
        .card { height: 100px; border-radius: 24px; background: linear-gradient(90deg, #fef6f4 58%, #fdf0ee 58%); display: flex; align-items: flex-start; gap: 34px; padding: 24px 32px; font-size: 36px; line-height: 44px; }
        .card i { width: 34px; height: 34px; margin-top: 6px; border-radius: 50%; background: #cf5a5a; }
        `;
    }

    markup() {
        return `<div class="cards"><div class="card"><i></i>大每快</div><div class="card"><i></i>每小时</div></div>`;
    }
}
customElements.define("topic-cards", TopicCards);

class ActionBar extends BaseElement {
    styles() {
        return `
        :host { background: #f6f8fa; border-top: 1px solid #cfd2d6; }
        nav { height: 135px; display: flex; color: #666; font-size: 35px; line-height: 44px; }
        .index { flex: 275; display: flex; flex-direction: column; align-items: center; color: #cd3230; padding-top: 9px; }
        .index strong { font-size: 39px; font-weight: 400; line-height: 50px; margin-top: 6px; }
        .index p { margin: 0 0 0 28px; display: flex; width: 221px; justify-content: space-between; line-height: 50px; }
        .index p span { color: #666; }
        .item { flex: 201; display: flex; flex-direction: column; align-items: center; padding-top: 8px; gap: 14px; }
        .add { color: #d65a14; }
        `;
    }

    markup() {
        return `
        <nav>
            <a class="index" href="#index">
                <svg width="20" height="7" viewBox="0 0 20 7"><path d="M0 7 10 0l10 7z" fill="#808085"/></svg>
                <strong>13452.42</strong>
                <p><span>深证</span>1.73%</p>
            </a>
            <button class="item">
                <svg width="64" height="60" viewBox="0 0 64 60" fill="none" stroke="#666" stroke-width="3">
                    <path d="M17 8A27 27 0 0 1 57 39M47 52A27 27 0 0 1 8 18M1 20l8-3 1 9M54 44l4-5 5-2"/>
                    <path d="m23 17 9 12 9-12M22 29h20M22 39h20M32 29v17"/>
                </svg>交易
            </button>
            <button class="item">
                <svg width="60" height="60" viewBox="0 0 60 60" fill="none" stroke="#666" stroke-width="3">
                    <path d="M38 4H8a5 5 0 0 0-5 5v44a5 5 0 0 0 5 5h44a5 5 0 0 0 5-5V22"/>
                    <path d="m48 11 4 5-28 24-4 1 1-5zM52 7l4-3 1 5-2 3z" fill="#666" stroke-width="2"/>
                </svg>发帖
            </button>
            <button class="item">
                <svg width="56" height="60" viewBox="0 0 56 60" fill="none" stroke="#666" stroke-width="3">
                    <rect x="4" y="5" width="22" height="23" rx="4"/><rect x="4" y="33" width="22" height="23" rx="4"/>
                    <rect x="31" y="33" width="22" height="23" rx="4"/><path d="m43 3 11 13-11 13-11-13z" stroke-linejoin="round"/>
                </svg>功能
            </button>
            <button class="item add">
                <svg width="60" height="60" viewBox="0 0 60 60" fill="none" stroke="#d65a14" stroke-width="3">
                    <circle cx="30" cy="30" r="27"/><path d="M16 30h28M30 16v28"/>
                </svg>加自选
            </button>
        </nav>`;
    }
}
customElements.define("action-bar", ActionBar);

class SystemNav extends BaseElement {
    styles() {
        return `nav { height: 124px; display: flex; justify-content: center; align-items: center; gap: 180px; } button { width: 60px; display: flex; justify-content: center; }`;
    }

    markup() {
        const attrs = `height="46" fill="none" stroke="#8a8a8a" stroke-width="6" stroke-linecap="round" stroke-linejoin="round"`;
        return `
        <nav>
            <button aria-label="菜单"><svg width="46" viewBox="0 0 46 46" ${attrs}><path d="M3 9h40M3 24h40M3 39h40"/></svg></button>
            <button aria-label="主页"><svg width="58" viewBox="0 0 58 46" ${attrs}><path d="M3 23 29 4l26 19M11 28v10q0 3 4 3h28q4 0 4-3V28"/></svg></button>
            <button aria-label="后退"><svg width="50" viewBox="0 0 50 46" ${attrs}><path d="M14 5 5 10h36q5 0 5 4v20q0 5-5 5H13"/></svg></button>
        </nav>`;
    }
}
customElements.define("system-nav", SystemNav);

// hand-drawn marker strokes lying over the whole screen
class MarkerLayer extends BaseElement {
    styles() {
        return `
        :host { position: absolute; top: 0; left: 0; width: 100%; pointer-events: none; }
        svg { width: 100%; height: auto; }
        `;
    }

    markup() {
        return `
        <svg viewBox="0 0 1080 1100" fill="none" stroke="#da565b" stroke-width="33" stroke-linecap="round" stroke-linejoin="round">
            <path d="M224 915Q228 875 239 847Q246 795 262 765Q283 745 307 728Q330 713 360 702Q383 696 430 706L410 714L434 712Q450 722 453 730Q471 755 472 783Q472 795 457 823Q447 855 442 877L433 917L430 940L408 993Q393 1026 380 1043Q365 1057 350 1043L333 1013Q317 985 300 978"/>
            <path d="M702 546Q690 566 678 585L648 628L630 653L606 700L593 740L580 773L577 845Q578 862 592 868L607 877L637 888Q667 895 690 885Q708 878 720 857Q743 845 767 813Q781 790 800 740Q808 710 811 690L818 640L823 573V543Q821 527 808 526Q780 523 754 529"/>
        </svg>`;
    }
}
customElements.define("marker-layer", MarkerLayer);

class StockPage extends BaseElement {
    styles() {
        return `
        :host { position: relative; overflow: hidden; }
        .charts { display: grid; grid-template-columns: 2fr 1fr; gap: 18px; padding: 0 30px 0 12px; }
        .charts > div { min-width: 0; }
        `;
    }

    markup() {
        return `
        <status-bar></status-bar>
        <stock-header></stock-header>
        <stock-stats></stock-stats>
        <notice-bar>AI异动解读：智能电网+新能源车+电机</notice-bar>
        <period-tabs></period-tabs>
        <average-bar></average-bar>
        <div class="charts">
            <div>
                <kline-chart></kline-chart>
                <indicator-row name="成交量" pick="150" next><value-list size="small" values="117.7万 MA1:121.5万 MA2:84.74万 MA3:56.54万" colors="#262626 #e6c233 #b834bd #178a1b"></value-list></indicator-row>
                <volume-chart></volume-chart>
                <indicator-row name="MACD" pick="150"><value-list size="large" values="DIF:0.62 DEA:0.29 M:0.67" colors="#262626 #e6c233 #b834bd"></value-list></indicator-row>
                <macd-chart></macd-chart>
                <indicator-row name="BIAS" pick="121"><value-list size="medium" values="BIAS1:10.57 BIAS2:22.65 BIAS3:28.20" colors="#262626 #e6c233 #b834bd"></value-list></indicator-row>
                <bias-chart></bias-chart>
            </div>
            <chip-panel></chip-panel>
        </div>
        <promo-banner>整整一年免费送！这份新客福利您领取了吗？</promo-banner>
        <info-tabs></info-tabs>
        <topic-cards></topic-cards>
        <action-bar></action-bar>
        <system-nav></system-nav>
        <marker-layer></marker-layer>`;
    }
}
customElements.define("stock-page", StockPage);
</script>
</body>
</html>
